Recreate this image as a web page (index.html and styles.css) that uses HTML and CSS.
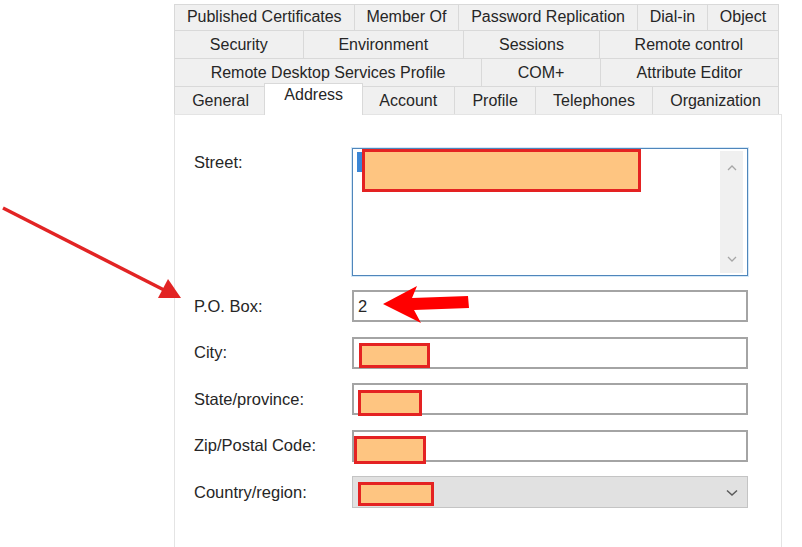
FILE: index.html
```html
<!DOCTYPE html>
<html lang="en">

<head>
    <meta charset="UTF-8">
    <meta name="viewport" content="width=device-width, initial-scale=1.0">
    <title>User Properties - Address</title>
    <link rel="stylesheet" href="styles.css">
</head>

<body>
    <div class="dialog">
        <div class="tabs">
            <div class="tab-row row-first">
                <div class="tab">Published Certificates</div>
                <div class="tab">Member Of</div>
                <div class="tab">Password Replication</div>
                <div class="tab">Dial-in</div>
                <div class="tab">Object</div>
            </div>
            <div class="tab-row">
                <div class="tab">Security</div>
                <div class="tab">Environment</div>
                <div class="tab">Sessions</div>
                <div class="tab">Remote control</div>
            </div>
            <div class="tab-row">
                <div class="tab">Remote Desktop Services Profile</div>
                <div class="tab">COM+</div>
                <div class="tab">Attribute Editor</div>
            </div>
            <div class="tab-row">
                <div class="tab">General</div>
                <div class="tab active">Address</div>
                <div class="tab">Account</div>
                <div class="tab">Profile</div>
                <div class="tab">Telephones</div>
                <div class="tab">Organization</div>
            </div>
        </div>

        <div class="panel">
            <div class="form">
                <div class="label label-top">Street:</div>
                <div class="field street">
                    <span class="selection"></span>
                    <span class="redact r-street"></span>
                    <div class="scrollbar">
                        <svg width="10" height="6" viewBox="0 0 10 6"><path d="M1 5 L5 1 L9 5" fill="none" stroke="#a6a6a6" stroke-width="1.3"/></svg>
                        <svg width="10" height="6" viewBox="0 0 10 6"><path d="M1 1 L5 5 L9 1" fill="none" stroke="#a6a6a6" stroke-width="1.3"/></svg>
                    </div>
                </div>

                <div class="label">P.O. Box:</div>
                <div class="field">2</div>

                <div class="label">City:</div>
                <div class="field"><span class="redact r-city"></span></div>

                <div class="label">State/province:</div>
                <div class="field"><span class="redact r-state"></span></div>

                <div class="label">Zip/Postal Code:</div>
                <div class="field"><span class="redact r-zip"></span></div>

                <div class="label">Country/region:</div>
                <div class="field combo">
                    <span class="redact r-country"></span>
                    <svg class="chevron" width="12" height="8" viewBox="0 0 12 8"><path d="M1 1.5 L6 6 L11 1.5" fill="none" stroke="#5a5a5a" stroke-width="1.5"/></svg>
                </div>
            </div>
        </div>
    </div>

    <!-- annotation arrows drawn over the screenshot -->
    <svg class="marks" width="802" height="547" viewBox="0 0 802 547">
        <line x1="3" y1="208" x2="166" y2="291" stroke="#e22424" stroke-width="3.5"/>
        <polygon points="181,298 168,279 158,298" fill="#e22424"/>
        <polygon points="383,304 417,286 412,298 468,296 469,308 414,310 421,323" fill="#ff0000"/>
    </svg>
</body>

</html>
```

FILE: styles.css
```css
body {
    margin: 0;
    height: 100vh;
    overflow: hidden;
    background-color: #ffffff;
    color: #262626;
    font-family: "Liberation Sans", Arial, sans-serif;
    position: relative;
}

.dialog {
    margin-left: 174px;
    width: 608px;
    height: 100%;
    padding-top: 4px;
    box-sizing: border-box;
    display: flex;
    flex-direction: column;
}

.tabs {
    width: 604px;
}

.tab-row {
    display: flex;
    height: 28px;
}

.row-first {
    height: 26px;
}

.tab {
    flex: 1 1 auto;
    box-sizing: border-box;
    padding: 0 8px;
    display: flex;
    align-items: center;
    justify-content: center;
    white-space: nowrap;
    font-size: 16px;
    background-color: #f0f0f0;
    border: 1px solid #d9d9d9;
    border-bottom: none;
    margin-right: -1px;
}

.row-first .tab {
    padding-bottom: 2px;
}

.tab.active {
    position: relative;
    z-index: 1;
    background-color: #ffffff;
    margin: -3px -2px 0;
    padding: 0 10px 9px;
    height: 32px;
}

.panel {
    flex: 1;
    background-color: #ffffff;
    border: 1px solid #e4e4e4;
    border-bottom: none;
    padding: 33px 0 0 19px;
}

.form {
    display: grid;
    grid-template-columns: 158px 396px;
    row-gap: 14.5px;
    align-items: center;
}

.label {
    font-size: 16.5px;
}

.label-top {
    align-self: start;
    padding-top: 4px;
    line-height: 20px;
}

.field {
    position: relative;
    box-sizing: border-box;
    height: 32px;
    border: 2px solid #a4a4a4;
    background-color: #ffffff;
    font-size: 16.5px;
    line-height: 28px;
    padding-left: 4px;
}

.street {
    height: 127.5px;
    border: 1px solid #4f86bb;
    box-shadow: 0 0 0 1px #d4e8f8;
}

.selection {
    position: absolute;
    left: 4px;
    top: 3px;
    width: 6px;
    height: 20px;
    background-color: #3a86d6;
}

.scrollbar {
    position: absolute;
    right: 4px;
    top: 2px;
    bottom: 2px;
    width: 23px;
    background-color: #f0f0f0;
    display: flex;
    flex-direction: column;
    justify-content: space-between;
    align-items: center;
    padding: 14px 0 11px;
    box-sizing: border-box;
}

.combo {
    background-color: #e1e1e1;
    border: 1px solid #c4c4c4;
}

.chevron {
    position: absolute;
    right: 9px;
    top: 12px;
}

.redact {
    position: absolute;
    box-sizing: border-box;
    background-color: #fec581;
    border: 3px solid #e42222;
}

.r-street {
    left: 9px;
    top: 0;
    width: 279px;
    height: 43px;
}

.r-city {
    left: 5px;
    top: 4.5px;
    width: 71px;
    height: 25px;
}

.r-state {
    left: 4px;
    top: 5px;
    width: 64px;
    height: 26px;
}

.r-zip {
    left: 0;
    top: 4.5px;
    width: 72px;
    height: 28px;
}

.r-country {
    left: 5px;
    top: 5px;
    width: 76px;
    height: 24px;
}

.marks {
    position: absolute;
    left: 0;
    top: 0;
    pointer-events: none;
}
```
